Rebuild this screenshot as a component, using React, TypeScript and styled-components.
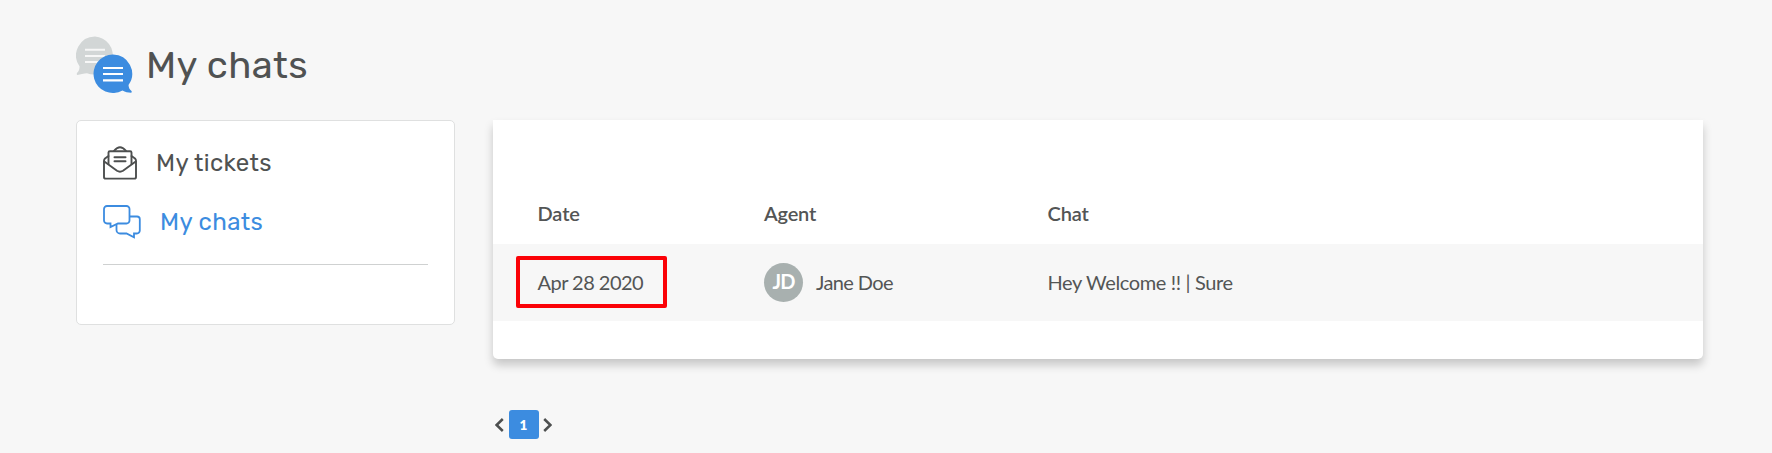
import React from "react";
import styled, { createGlobalStyle } from "styled-components";

const GlobalStyle = createGlobalStyle`
  * { box-sizing: border-box; }
  body { margin: 0; background: #f7f7f7; color: #535555; font-family: Lato, "Liberation Sans", sans-serif; }
`;

const Page = styled.div`
  height: 453px;
  padding: 36px 69px 0 76px;
  overflow: hidden;
`;

const Header = styled.header`
  display: flex;
  align-items: flex-start;
  height: 84px;
`;

const Title = styled.h1`
  margin: 7px 0 0 12px;
  font: 400 38px/44px Rubik, Roboto, sans-serif;
  letter-spacing: 0.45px;
  color: #505252;
`;

const Columns = styled.div`
  display: flex;
  align-items: flex-start;
  gap: 38px;
`;

const Sidebar = styled.nav`
  width: 379px;
  height: 205px;
  padding: 24px 26px 0;
  background: #fff;
  border: 1px solid #dfe0e0;
  border-radius: 5px;
`;

const NavItem = styled.a<{ $active?: boolean }>`
  display: flex;
  align-items: center;
  height: 36px;
  margin-bottom: 23px;
  color: ${(p) => (p.$active ? "#3c8ce0" : "#505252")};
  font: 400 24px/36px Rubik, Roboto, sans-serif;
  letter-spacing: 0.35px;

  svg { flex: none; margin-right: 19px; }
`;

const Divider = styled.hr`
  height: 1px;
  margin: 24px 0 0;
  border: 0;
  background: #cfd1d1;
`;

const Main = styled.main`
  flex: 1;
`;

const Panel = styled.section`
  height: 239px;
  padding-top: 63px;
  background: #fff;
  border-radius: 0 0 5px 5px;
  box-shadow: 0 6px 10px rgba(0, 0, 0, 0.2);
`;

const Row = styled.div<{ $head?: boolean }>`
  display: grid;
  grid-template-columns: 226.5px 283.5px 1fr;
  align-items: center;
  height: ${(p) => (p.$head ? "61px" : "77px")};
  padding-left: 44.5px;
  background: ${(p) => (p.$head ? "#fff" : "#f7f7f7")};
  font-size: 20px;
  line-height: 24px;
  font-weight: ${(p) => (p.$head ? 600 : 400)};
`;

const Cell = styled.div<{ $tracking?: number }>`
  display: flex;
  align-items: center;
  padding-bottom: 2px;
  white-space: nowrap;
  letter-spacing: ${(p) => p.$tracking ?? 0}px;
`;

const Marked = styled.div`
  display: flex;
  align-items: center;
  width: 151px;
  height: 52px;
  margin: 1px 0 0 -22px;
  padding: 0 0 1px 18px;
  border: 4px solid #fb0207;
  border-radius: 2px;
`;

const Avatar = styled.span`
  width: 39px;
  height: 39px;
  margin: 2px 13px 0 0;
  border-radius: 50%;
  background: #a8b0af;
  color: #fff;
  font-size: 20px;
  font-weight: 700;
  line-height: 37px;
  letter-spacing: -1px;
  text-align: center;
`;

const Pager = styled.div`
  display: flex;
  align-items: center;
  gap: 4.5px;
  margin: 51px 0 0 2px;
`;

const PageNumber = styled.button`
  width: 30px;
  height: 29px;
  padding: 0;
  border: 0;
  border-radius: 3px;
  background: #3c8ce0;
  color: #fff;
  font: 800 13.5px/31px Lato, sans-serif;
`;

const HeaderIcon = () => (
  <svg width="58" height="60" viewBox="0 0 58 60">
    <path d="M19 .5a19 19 0 1 1-8 36.7C8 37.5 4 38.5 1.5 39 .5 38.7.7 37.5 1 37c2-2 2.500-4 2.600-6.500A19 19 0 0 1 19 .5z" fill="#d2d6d6" />
    <path d="M9 13.700h20M9 20h20M9 26h20" stroke="#f7f7f7" strokeWidth="2" />
    <path d="M37 18.500a19.300 19.300 0 0 1 15.500 30.500c.2 2.500 1 4.500 3 6 .5.8.2 1.700-.5 1.700-3 0-5.800-.7-8.500-2.200A19.300 19.300 0 1 1 37 18.500z" fill="#3c8ce0" />
    <path d="M27 32h20M27 38h20M27 44.300h20" stroke="#fff" strokeWidth="2.200" />
  </svg>
);

const TicketIcon = () => (
  <svg width="34" height="36" viewBox="0 0 34 36" fill="none" stroke="#4d4f4f" strokeWidth="1.900" strokeLinejoin="round" strokeLinecap="round">
    <path d="M5.500 11 2 13.500C1.300 14.200 1 15 1 16v15.900c0 1.100.6 1.700 1.700 1.700h28.600c1.100 0 1.700-.6 1.700-1.700V16c0-1-.3-1.800-1-2.500L28.500 11" />
    <path d="M1.300 16.500 14 25.800c2 1.300 4 1.300 6 0l12.700-9.300" />
    <path d="M5.500 19V7.600c0-.9.500-1.400 1.400-1.400h20.200c.9 0 1.400.5 1.400 1.400V19" />
    <path d="M11 5.800c2-2.200 4-3.500 6-3.500s4 1.300 6 3.500" />
    <path d="M11.500 12.300h11M11.500 16.300h11" strokeWidth="2" />
  </svg>
);

const ChatIcon = () => (
  <svg width="38" height="36" viewBox="0 0 38 36" fill="none" stroke="#3c8ce0" strokeWidth="1.800" strokeLinejoin="miter">
    <path d="M4 2h19.500a3 3 0 0 1 3 3v11.500a3 3 0 0 1-3 3H15l-7.500 3.500v-3.500H4a3 3 0 0 1-3-3V5a3 3 0 0 1 3-3z" />
    <path d="M26.500 12.500H34a2.800 2.800 0 0 1 2.800 2.800v11.200a3 3 0 0 1-3 3H31v3.800l-7.500-3.800H17a3.500 3.500 0 0 1-3.500-3.500v-6" />
  </svg>
);

const Chevron = ({ right }: { right?: boolean }) => (
  <svg width="9" height="14" viewBox="0 0 9 14" fill="none" stroke="#4d4f4f" strokeWidth="2.500">
    <path d={right ? "M1.200 1l6.200 6-6.200 6" : "M7.800 1 1.600 7l6.200 6"} />
  </svg>
);

export default function App() {
  return (
    <>
      <GlobalStyle />
      <Page>
        <Header>
          <HeaderIcon />
          <Title>My chats</Title>
        </Header>
        <Columns>
          <Sidebar>
            <NavItem><TicketIcon />My tickets</NavItem>
            <NavItem $active><ChatIcon />My chats</NavItem>
            <Divider />
          </Sidebar>
          <Main>
            <Panel>
              <Row $head>
                <Cell $tracking={-0.1}>Date</Cell>
                <Cell $tracking={-0.2}>Agent</Cell>
                <Cell $tracking={-0.1}>Chat</Cell>
              </Row>
              <Row>
                <Cell $tracking={-0.52}><Marked>Apr 28 2020</Marked></Cell>
                <Cell $tracking={-0.6}><Avatar>JD</Avatar>Jane Doe</Cell>
                <Cell $tracking={-0.36}>Hey Welcome !! | Sure</Cell>
              </Row>
            </Panel>
            <Pager>
              <Chevron />
              <PageNumber>1</PageNumber>
              <Chevron right />
            </Pager>
          </Main>
        </Columns>
      </Page>
    </>
  );
}
